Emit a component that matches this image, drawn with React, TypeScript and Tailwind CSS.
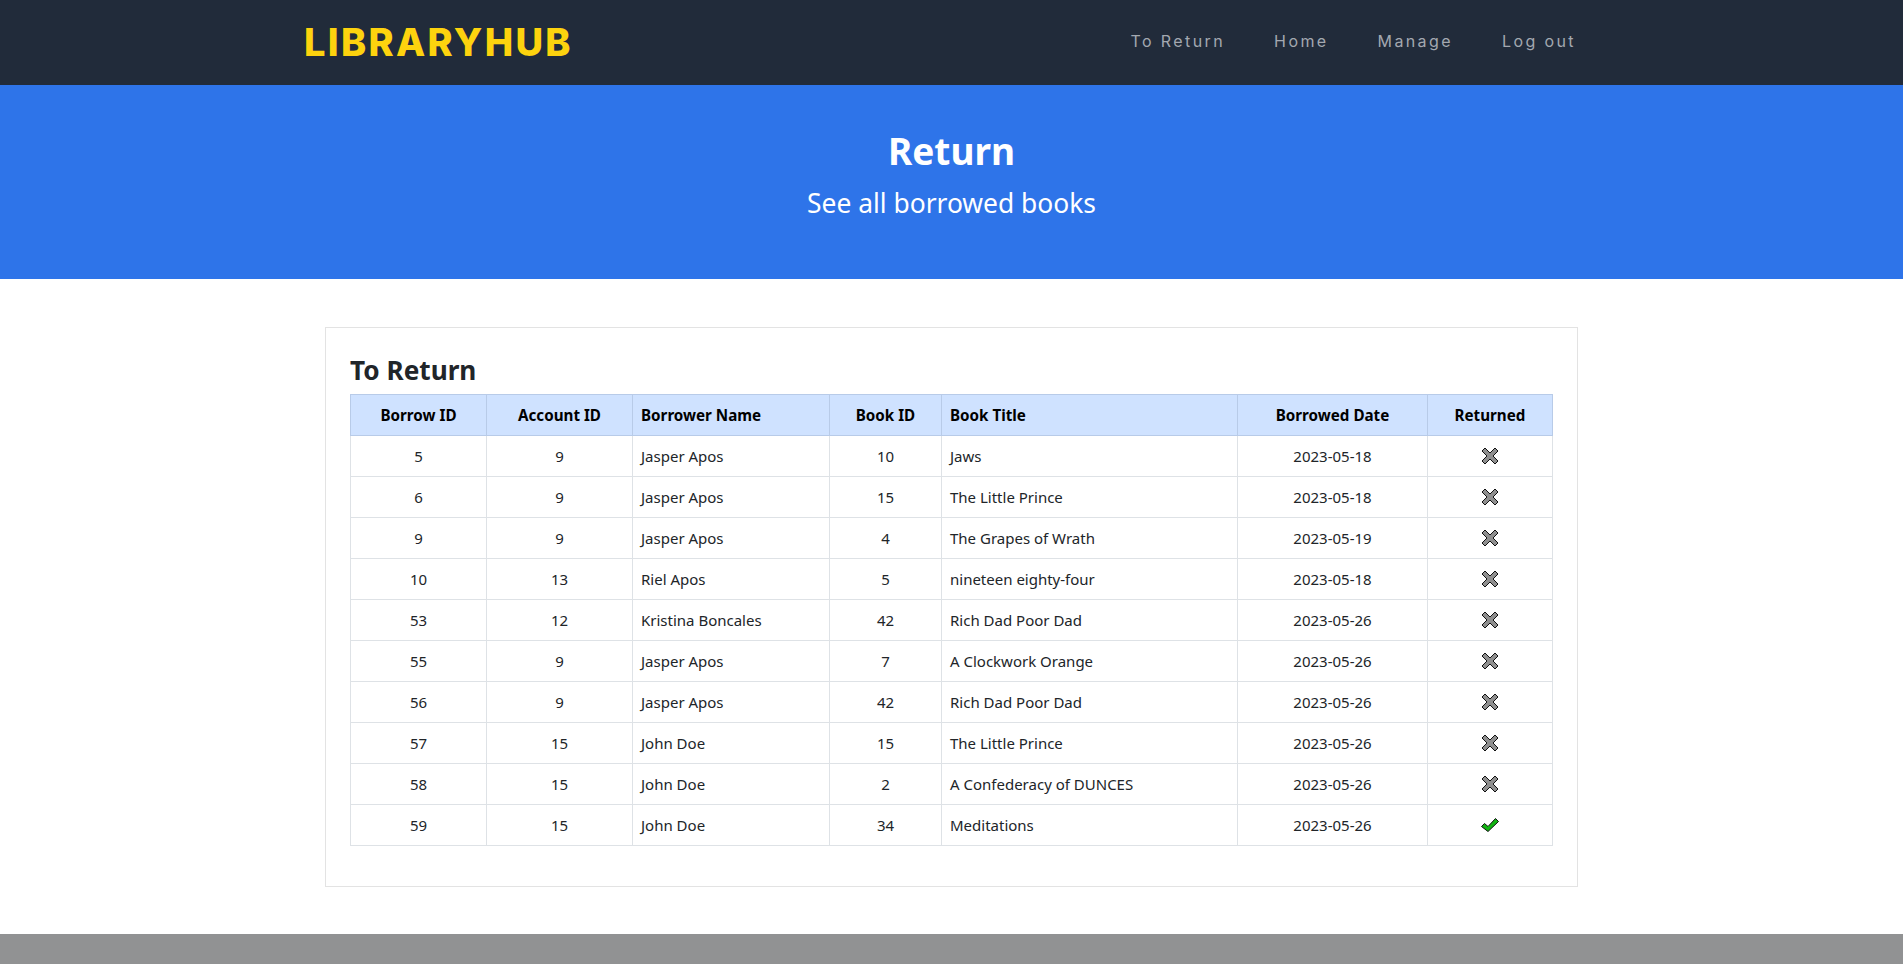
const F = "font-['Noto_Sans',sans-serif]";

const rows: [number, number, string, number, string, string, boolean][] = [
  [5, 9, "Jasper Apos", 10, "Jaws", "2023-05-18", false],
  [6, 9, "Jasper Apos", 15, "The Little Prince", "2023-05-18", false],
  [9, 9, "Jasper Apos", 4, "The Grapes of Wrath", "2023-05-19", false],
  [10, 13, "Riel Apos", 5, "nineteen eighty-four", "2023-05-18", false],
  [53, 12, "Kristina Boncales", 42, "Rich Dad Poor Dad", "2023-05-26", false],
  [55, 9, "Jasper Apos", 7, "A Clockwork Orange", "2023-05-26", false],
  [56, 9, "Jasper Apos", 42, "Rich Dad Poor Dad", "2023-05-26", false],
  [57, 15, "John Doe", 15, "The Little Prince", "2023-05-26", false],
  [58, 15, "John Doe", 2, "A Confederacy of DUNCES", "2023-05-26", false],
  [59, 15, "John Doe", 34, "Meditations", "2023-05-26", true],
];

function Cross() {
  return (
    <svg width="18" height="18" viewBox="0 0 18 18" className="mx-auto block">
      <path d="M1 4 4 1 9 6 14 1 17 4 12 9 17 14 14 17 9 12 4 17 1 14 6 9Z" fill="#8f8f8f" stroke="#111" strokeWidth="1" strokeLinejoin="round" />
    </svg>
  );
}

function Check() {
  return (
    <svg width="18" height="18" viewBox="0 0 18 18" className="mx-auto block">
      <path d="M0.5 10.5 3.5 7.5 7 10.5 14.5 2.5 17.5 5.5 7 15.5Z" fill="#11b411" stroke="#111" strokeWidth="1" strokeLinejoin="round" />
    </svg>
  );
}

const th = "border border-[#b8cbe8] font-bold text-black text-[15.2px] px-[8px] h-[41px] p-0";
const td = "border border-[#dee2e6] text-[#212529] text-[15px] px-[8px] h-[41px] p-0";

export default function App() {
  return (
    <div className={`${F} h-[964px] bg-white flex flex-col overflow-hidden`}>
      <header className="h-[85px] shrink-0 bg-[#212b3a] flex items-center justify-between pl-[304px] pr-[327px]">
        <div className="font-['Inter',sans-serif] font-extrabold text-[38px] tracking-[2.3px] text-[#fdd30e] leading-none -mt-[2px]">LIBRARYHUB</div>
        <nav className="flex gap-[49px] font-['Inter',sans-serif] text-[16px] tracking-[2.4px] text-[#a3a8b0] -mt-[4px]">
          <span>To Return</span>
          <span>Home</span>
          <span>Manage</span>
          <span>Log out</span>
        </nav>
      </header>
      <section className="h-[194px] shrink-0 bg-[#2e74e9] text-white text-center pt-[42px]">
        <h1 className="text-[37px] font-bold leading-[48px]">Return</h1>
        <p className="text-[26.4px] leading-[36px] mt-[10px]">See all borrowed books</p>
      </section>
      <main className="flex-1 pt-[48px]">
        <div className="ml-[325px] w-[1253px] h-[560px] border border-[#e3e3e3] pt-[24px] pl-[24px]">
          <h2 className="text-[26.2px] font-bold text-[#212529] leading-[36px] mb-[6px]">To Return</h2>
          <table className="w-[1203px] border-collapse table-fixed">
            <colgroup>
              <col className="w-[136px]" />
              <col className="w-[146px]" />
              <col className="w-[197px]" />
              <col className="w-[112px]" />
              <col className="w-[296px]" />
              <col className="w-[190px]" />
              <col className="w-[125px]" />
            </colgroup>
            <thead className="bg-[#cfe2ff]">
              <tr>
                <th className={`${th} text-center`}>Borrow ID</th>
                <th className={`${th} text-center`}>Account ID</th>
                <th className={`${th} text-left`}>Borrower Name</th>
                <th className={`${th} text-center`}>Book ID</th>
                <th className={`${th} text-left`}>Book Title</th>
                <th className={`${th} text-center`}>Borrowed Date</th>
                <th className={`${th} text-center`}>Returned</th>
              </tr>
            </thead>
            <tbody>
              {rows.map((r) => (
                <tr key={r[0]}>
                  <td className={`${td} text-center`}>{r[0]}</td>
                  <td className={`${td} text-center`}>{r[1]}</td>
                  <td className={`${td} text-left`}>{r[2]}</td>
                  <td className={`${td} text-center`}>{r[3]}</td>
                  <td className={`${td} text-left`}>{r[4]}</td>
                  <td className={`${td} text-center`}>{r[5]}</td>
                  <td className={`${td} text-center`}>{r[6] ? <Check /> : <Cross />}</td>
                </tr>
              ))}
            </tbody>
          </table>
        </div>
      </main>
      <footer className="h-[30px] shrink-0 bg-[#919293]" />
    </div>
  );
}
